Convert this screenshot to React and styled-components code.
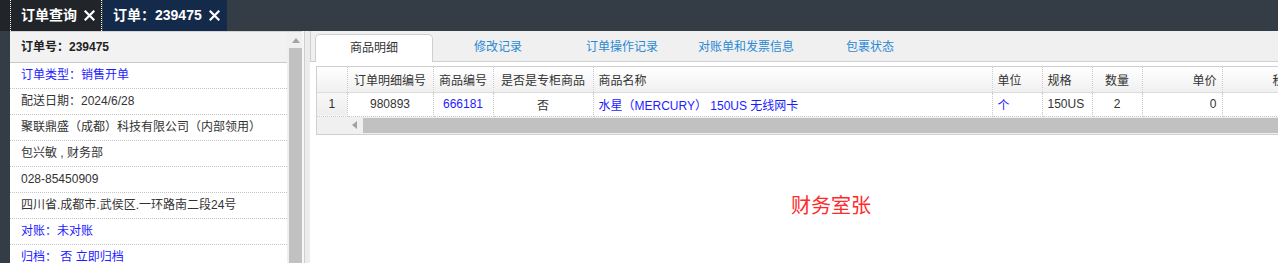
import React from "react";
import styled, { createGlobalStyle, css } from "styled-components";

const GlobalStyle = createGlobalStyle`
  html, body { margin: 0; padding: 0; }
  body {
    font-family: "Liberation Sans", Arial, "Noto Sans CJK SC", sans-serif;
    font-size: 12px;
    color: #333;
    background: #fff;
  }
  * { box-sizing: border-box; }
`;

const Page = styled.div`
  width: 1278px;
  height: 263px;
  overflow: hidden;
  display: flex;
  flex-direction: column;
  background: #343d46;
`;

const TopBar = styled.div`
  height: 31px;
  flex-shrink: 0;
  display: flex;
  align-items: stretch;
  background: #343d46;
`;

const TopTab = styled.div`
  display: flex;
  align-items: stretch;
  background: ${(p) => (p.$current ? "#132a4b" : "#212529")};
  padding-left: ${(p) => (p.$current ? "0" : "10px")};
  border-left: ${(p) => (p.$current ? "1px solid #343d46" : "none")};
`;

const TopTabInner = styled.div`
  display: flex;
  align-items: center;
  gap: 7px;
  padding: ${(p) => (p.$current ? "0 7px 0 10px" : "0 6px 0 10px")};
  color: #fff;
  font-size: 14px;
  font-weight: bold;
  line-height: 31px;
  ${(p) =>
    p.$focused &&
    css`
      border-left: 1px dotted #fff;
      border-right: 1px dotted #fff;
    `}
`;

const CloseIcon = () => (
  <svg width="11" height="11" viewBox="0 0 11 11">
    <path d="M1.5 1.5 L9.5 9.5 M9.5 1.5 L1.5 9.5" stroke="#fff" strokeWidth="2.2" strokeLinecap="square" />
  </svg>
);

const Body = styled.div`
  flex: 1;
  display: flex;
  padding-left: 10px;
  min-height: 0;
`;

const LeftPanel = styled.div`
  width: 277px;
  flex-shrink: 0;
  background: #fff;
  border-top: 1px solid #d4d4d4;
  overflow: hidden;
`;

const InfoHeader = styled.div`
  height: 31px;
  background: #f2f2f2;
  border-bottom: 1px solid #c8c8c8;
  padding-left: 11px;
  line-height: 30px;
  font-weight: bold;
  color: #222;
`;

const InfoRow = styled.div`
  height: 26px;
  line-height: 25px;
  padding-left: 11px;
  border-bottom: 1px dotted #c4c4c4;
  color: ${(p) => (p.$blue ? "#1c1cff" : "#333")};
  white-space: nowrap;
`;

const VScroll = styled.div`
  width: 15px;
  flex-shrink: 0;
  background: #f0f0f0;
  border-top: 1px solid #d4d4d4;
  display: flex;
  flex-direction: column;
  align-items: flex-end;
`;

const ScrollArrow = styled.div`
  width: 13px;
  height: 16px;
  display: flex;
  align-items: center;
  justify-content: center;
`;

const VThumb = styled.div`
  width: 13px;
  flex: 1;
  background: #c1c1c1;
`;

const Gutter = styled.div`
  width: 8px;
  flex-shrink: 0;
  background: #ececec;
  border-left: 2px solid #f7f7f7;
  &::before {
    content: "";
    display: block;
    width: 1px;
    height: 100%;
    background: #cfcfcf;
  }
`;

const RightPanel = styled.div`
  width: 1042px;
  flex-shrink: 0;
  background: #fff;
  display: flex;
  flex-direction: column;
`;

const TabStrip = styled.div`
  height: 31px;
  flex-shrink: 0;
  background: #f0f0f0;
  border-left: 1px solid #cfcfcf;
  border-bottom: 1px solid #cfcfcf;
  padding-left: 4px;
  display: flex;
  align-items: flex-end;
`;

const PanelTab = styled.div`
  width: 118px;
  height: 28px;
  margin-right: 6px;
  margin-bottom: -1px;
  text-align: center;
  line-height: 26px;
  font-size: 12px;
  color: ${(p) => (p.$active ? "#333" : "#2a89d3")};
  ${(p) =>
    p.$active &&
    css`
      background: #fff;
      border: 1px solid #cfcfcf;
      border-bottom: none;
      border-radius: 5px 5px 0 0;
    `}
`;

const Content = styled.div`
  padding: 4px 6px 0 6px;
`;

const Grid = styled.div`
  border: 1px solid #cfcfcf;
  background: #fff;
`;

const Table = styled.table`
  border-collapse: collapse;
  table-layout: fixed;
  width: 1028px;
  font-size: 12px;
`;

const alignCss = css`
  text-align: ${(p) => p.$align || "left"};
`;

const Th = styled.th`
  height: 25px;
  padding: 0 5px;
  font-weight: normal;
  color: #333;
  white-space: nowrap;
  overflow: hidden;
  background: linear-gradient(#ffffff, #f0f0f0);
  border-right: 1px dotted #c8c8c8;
  border-bottom: 1px solid #dcdcdc;
  ${alignCss}
`;

const Td = styled.td`
  height: 24px;
  padding: 0 5px;
  white-space: nowrap;
  overflow: hidden;
  color: ${(p) => (p.$blue ? "#1c1cff" : "#333")};
  border-right: 1px dotted #c8c8c8;
  border-bottom: 1px dotted #c8c8c8;
  ${alignCss}
`;

const NumCell = styled(Td)`
  background: linear-gradient(#f7f7f7, #eeeeee);
  text-align: center;
`;

const HScroll = styled.div`
  height: 17px;
  display: flex;
  align-items: stretch;
  background: #f0f0f0;
  padding: 1px 0;
`;

const HArrow = styled.div`
  width: 46px;
  display: flex;
  align-items: center;
  justify-content: flex-end;
  padding-right: 6px;
`;

const HThumb = styled.div`
  flex: 1;
  background: #c1c1c1;
`;

const Note = styled.div`
  margin-top: 57px;
  text-align: center;
  color: #ff2a2a;
  font-size: 20px;
  line-height: 28px;
`;

const columns = [
  { key: "n", w: 30 },
  { key: "id", title: "订单明细编号", w: 86, align: "center" },
  { key: "code", title: "商品编号", w: 60, align: "center" },
  { key: "spec", title: "是否是专柜商品", w: 100, align: "center" },
  { key: "name", title: "商品名称", w: 399, align: "left" },
  { key: "unit", title: "单位", w: 50, align: "left" },
  { key: "size", title: "规格", w: 50, align: "left" },
  { key: "qty", title: "数量", w: 50, align: "center" },
  { key: "price", title: "单价", w: 80, align: "right" },
  { key: "tax", title: "税额", w: 80, align: "right" },
  { key: "sum", title: "金额", w: 43, align: "right" },
];

const row = {
  id: { v: "980893" },
  code: { v: "666181", blue: true },
  spec: { v: "否" },
  name: { v: "水星（MERCURY） 150US 无线网卡", blue: true },
  unit: { v: "个", blue: true },
  size: { v: "150US" },
  qty: { v: "2" },
  price: { v: "0" },
  tax: { v: "" },
  sum: { v: "" },
};

const info = [
  { t: "订单类型：销售开单", blue: true },
  { t: "配送日期：2024/6/28" },
  { t: "聚联鼎盛（成都）科技有限公司（内部领用）" },
  { t: "包兴敏 , 财务部" },
  { t: "028-85450909" },
  { t: "四川省.成都市.武侯区.一环路南二段24号" },
  { t: "对账：未对账", blue: true },
  { t: "归档：  否 立即归档", blue: true },
];

const tabs = ["商品明细", "修改记录", "订单操作记录", "对账单和发票信息", "包裹状态"];

export default function App() {
  return (
    <>
      <GlobalStyle />
      <Page>
        <TopBar>
          <TopTab>
            <TopTabInner $focused>
              <span>订单查询</span>
              <CloseIcon />
            </TopTabInner>
          </TopTab>
          <TopTab $current>
            <TopTabInner $current>
              <span>订单：239475</span>
              <CloseIcon />
            </TopTabInner>
          </TopTab>
        </TopBar>
        <Body>
          <LeftPanel>
            <InfoHeader>订单号：239475</InfoHeader>
            {info.map((r, i) => (
              <InfoRow key={i} $blue={r.blue}>
                {r.t}
              </InfoRow>
            ))}
          </LeftPanel>
          <VScroll>
            <ScrollArrow>
              <svg width="8" height="5" viewBox="0 0 8 5">
                <path d="M0 5 L4 0 L8 5 Z" fill="#a3a3a3" />
              </svg>
            </ScrollArrow>
            <VThumb />
          </VScroll>
          <Gutter />
          <RightPanel>
            <TabStrip>
              {tabs.map((t, i) => (
                <PanelTab key={t} $active={i === 0}>
                  {t}
                </PanelTab>
              ))}
            </TabStrip>
            <Content>
              <Grid>
                <Table>
                  <colgroup>
                    {columns.map((c) => (
                      <col key={c.key} style={{ width: c.w }} />
                    ))}
                  </colgroup>
                  <thead>
                    <tr>
                      {columns.map((c) => (
                        <Th key={c.key} $align={c.align}>
                          {c.title || ""}
                        </Th>
                      ))}
                    </tr>
                  </thead>
                  <tbody>
                    <tr>
                      <NumCell>1</NumCell>
                      {columns.slice(1).map((c) => (
                        <Td key={c.key} $align={c.align} $blue={row[c.key].blue}>
                          {row[c.key].v}
                        </Td>
                      ))}
                    </tr>
                  </tbody>
                </Table>
                <HScroll>
                  <HArrow>
                    <svg width="5" height="8" viewBox="0 0 5 8">
                      <path d="M5 0 L0 4 L5 8 Z" fill="#a3a3a3" />
                    </svg>
                  </HArrow>
                  <HThumb />
                </HScroll>
              </Grid>
              <Note>财务室张</Note>
            </Content>
          </RightPanel>
        </Body>
      </Page>
    </>
  );
}
